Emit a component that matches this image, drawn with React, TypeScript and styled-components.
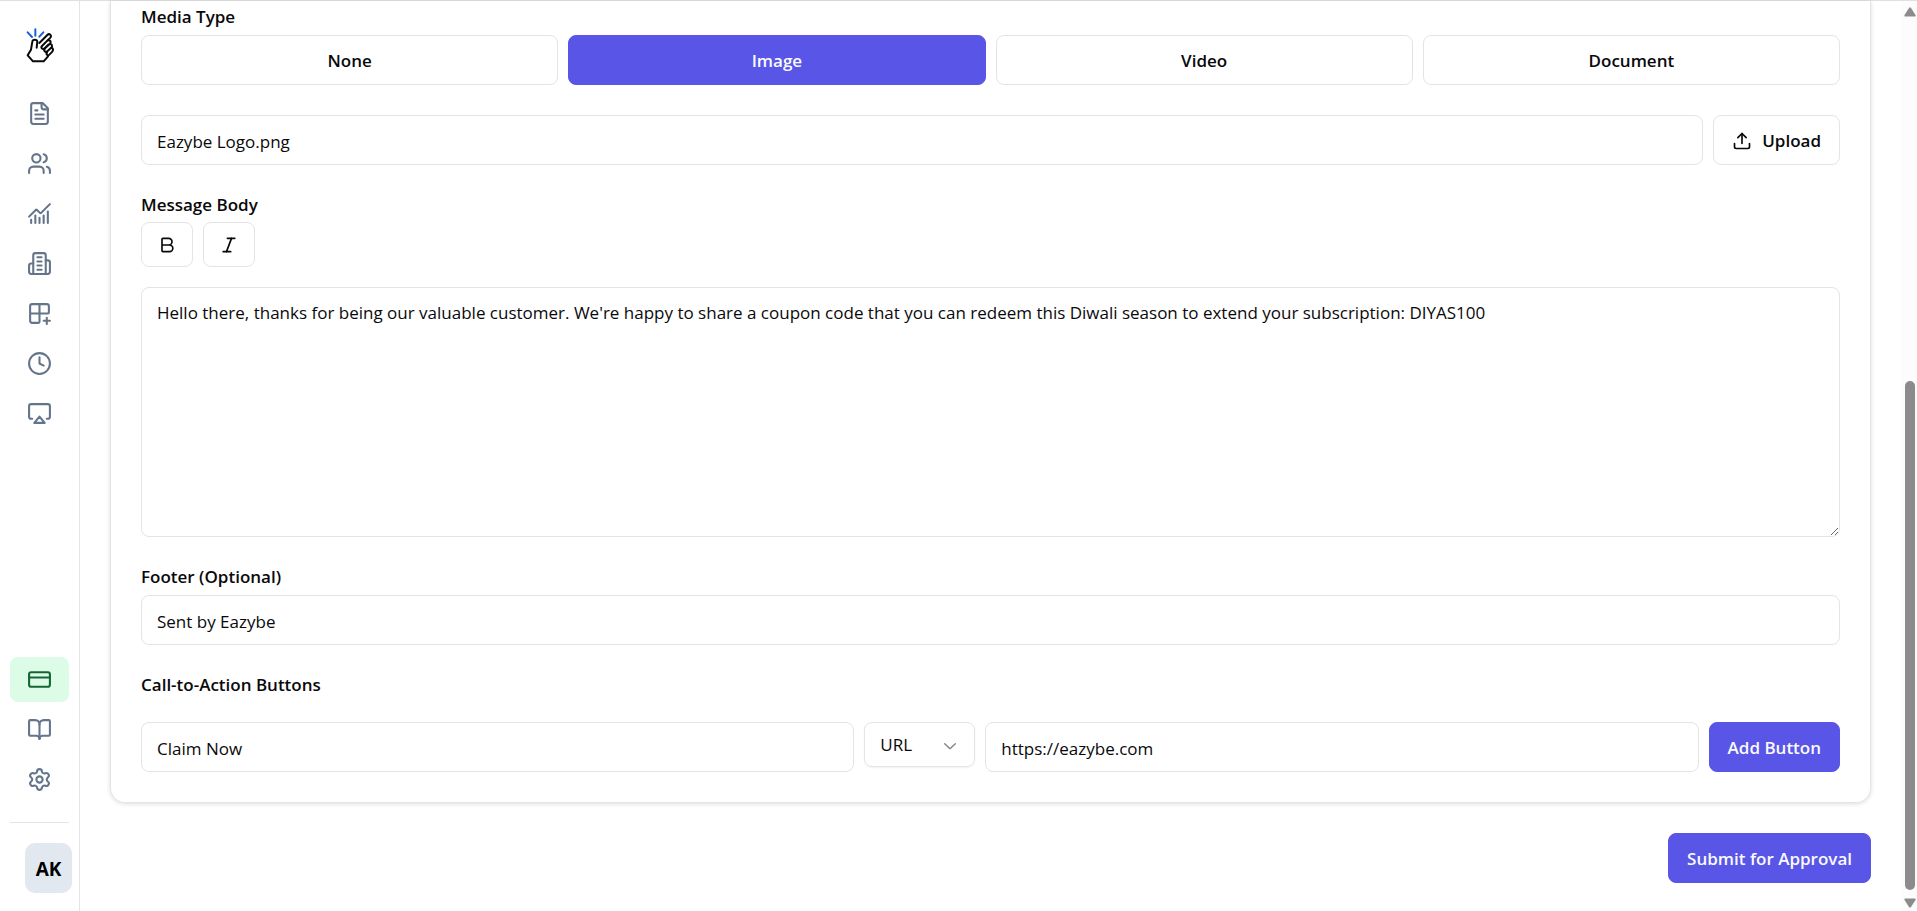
import React, { useState } from "react";
import styled, { createGlobalStyle, css } from "styled-components";
import { Airplay, Bold, BookOpen, ChartNoAxesCombined, Italic, Settings, Upload, Users } from "lucide-react";

const c = {
  border: "#e4e4e7",
  text: "#09090b",
  primary: "#5855e7",
  onPrimary: "#fafafa",
  icon: "#64748b",
};

const GlobalStyle = createGlobalStyle`
  *, *::before, *::after { box-sizing: border-box; }
  body {
    margin: 0;
    background: #fff;
    color: ${c.text};
    font-family: "Segoe UI", "Open Sans", "Noto Sans", sans-serif;
    font-size: 17px;
    line-height: 20px;
  }
  button, input, textarea, select { font: inherit; color: inherit; margin: 0; }
`;

const Page = styled.div`
  display: flex;
  min-height: 100vh;
  border-top: 1px solid #e0e0e0;
`;

const Sidebar = styled.nav`
  display: flex;
  flex-direction: column;
  flex: none;
  width: 80px;
  padding: 26px 10px 18px;
  border-right: 1px solid ${c.border};
`;

const LogoLink = styled.a`
  display: flex;
  justify-content: center;
  margin-bottom: 28px;
`;

const NavList = styled.div<{ $end?: boolean }>`
  display: flex;
  flex-direction: column;
  gap: 5px;
  ${(p) => p.$end && css`margin-top: auto;`}
`;

const NavLink = styled.a<{ $active?: boolean }>`
  display: flex;
  align-items: center;
  justify-content: center;
  height: 45px;
  border-radius: 8px;
  color: ${(p) => (p.$active ? "#166534" : c.icon)};
  background: ${(p) => (p.$active ? "#dcfce7" : "transparent")};
`;

const Divider = styled.hr`
  width: 100%;
  height: 1px;
  margin: 20px 0;
  border: 0;
  background: ${c.border};
`;

const Avatar = styled.button`
  align-self: flex-end;
  width: 47px;
  height: 50px;
  margin-right: -3px;
  padding: 2px 0 0;
  border: 0;
  border-radius: 10px;
  background: #e2e8f0;
  color: #000;
  font-size: 19px;
  font-weight: 700;
`;

const Main = styled.main`
  display: flex;
  flex-direction: column;
  flex: 1;
  min-width: 0;
  padding: 0 30px 28px;
`;

const Card = styled.section`
  display: flex;
  flex-direction: column;
  gap: 30px;
  padding: 6px 30px 30px;
  border: 1px solid ${c.border};
  border-top: 0;
  border-radius: 0 0 15px 15px;
  box-shadow: 0 1px 4px rgba(0, 0, 0, 0.14);
`;

const Field = styled.div<{ $gap?: number }>`
  display: flex;
  flex-direction: column;
  gap: ${(p) => p.$gap ?? 8}px;
`;

const labelText = css`
  display: block;
  font-weight: 600;
  line-height: 20px;
`;
const Label = styled.label`${labelText}`;
const Heading = styled.div`${labelText}`;

const Row = styled.div`
  display: flex;
  align-items: flex-start;
  gap: 10px;
`;

const Choices = styled.div`
  display: grid;
  grid-template-columns: repeat(4, 1fr);
  gap: 10px;
`;

const Button = styled.button<{ $primary?: boolean }>`
  display: inline-flex;
  align-items: center;
  justify-content: center;
  gap: 10px;
  flex: none;
  height: 50px;
  padding: 1px 18px 0;
  border: 1px solid ${(p) => (p.$primary ? c.primary : c.border)};
  border-radius: 8px;
  background: ${(p) => (p.$primary ? c.primary : "#fff")};
  color: ${(p) => (p.$primary ? c.onPrimary : c.text)};
  font-weight: 600;
  white-space: nowrap;
  cursor: pointer;
`;

const ToolButton = styled(Button)`
  width: 52px;
  height: 45px;
  padding: 0;
`;

const Toolbar = styled(Row)`
  margin-bottom: 13px;
`;

const boxed = css`
  border: 1px solid ${c.border};
  border-radius: 8px;
  background: transparent;
  outline-color: ${c.primary};
`;

const TextInput = styled.input`
  ${boxed}
  flex: 1;
  min-width: 0;
  height: 50px;
  padding: 2px 15px 0;
`;

const BlockInput = styled(TextInput)`
  flex: none;
  width: 100%;
`;

const TextArea = styled.textarea`
  ${boxed}
  display: block;
  width: 100%;
  height: 250px;
  padding: 12px 15px;
  line-height: 25px;
  resize: vertical;
`;

const SelectWrap = styled.div`
  position: relative;
  flex: none;
  width: 111px;

  svg {
    position: absolute;
    top: 13px;
    right: 15px;
    opacity: 0.5;
    pointer-events: none;
  }
`;

const Select = styled.select`
  ${boxed}
  appearance: none;
  width: 100%;
  height: 45px;
  padding: 0 15px;
  box-shadow: 0 1px 2px rgba(0, 0, 0, 0.06);
`;

const Actions = styled.div`
  display: flex;
  justify-content: flex-end;
  margin-top: 30px;
`;

const ScrollRail = styled.div`
  display: flex;
  flex-direction: column;
  align-items: center;
  flex: none;
  width: 16px;
  padding: 6px 0 3px 2px;
  background: #fcfcfc;
`;

const Track = styled.div`
  flex: 5;
`;

const Thumb = styled.div`
  flex: 7;
  width: 10px;
  margin-bottom: 8px;
  border-radius: 5px;
  background: #8b8b8b;
`;

const Stroke = ({ children }: { children: React.ReactNode }) => (
  <svg width="25" height="25" viewBox="0 0 24 24" fill="none" stroke="currentColor" strokeWidth="2" strokeLinecap="round" strokeLinejoin="round" aria-hidden="true">
    {children}
  </svg>
);

const FileIcon = () => (
  <Stroke>
    <path d="M15 2H6a2 2 0 0 0-2 2v16a2 2 0 0 0 2 2h12a2 2 0 0 0 2-2V7Z" />
    <path d="M14 2v4a2 2 0 0 0 2 2h4M10 9H8M16 13H8M16 17H8" />
  </Stroke>
);

const BuildingIcon = () => (
  <Stroke>
    <path d="M6 22V4a2 2 0 0 1 2-2h8a2 2 0 0 1 2 2v18Z" />
    <path d="M6 12H4a2 2 0 0 0-2 2v6a2 2 0 0 0 2 2h2M18 9h2a2 2 0 0 1 2 2v9a2 2 0 0 1-2 2h-2" />
    <path d="M10 6h4M10 10h4M10 14h4M10 18h4" />
  </Stroke>
);

const GridPlusIcon = () => (
  <Stroke>
    <path d="M12 3v17a1 1 0 0 1-1 1H5a2 2 0 0 1-2-2V5a2 2 0 0 1 2-2h14a2 2 0 0 1 2 2v6a1 1 0 0 1-1 1H3M16 19h6M19 22v-6" />
  </Stroke>
);

const ClockIcon = () => (
  <Stroke>
    <circle cx="12" cy="12" r="10" />
    <path d="M12 6v6l4 2" />
  </Stroke>
);

const CardIcon = () => (
  <Stroke>
    <rect x="2" y="5" width="20" height="14" rx="2" />
    <path d="M2 10h20" />
  </Stroke>
);

const Logo = () => (
  <svg width="28" height="36" viewBox="0 0 84 108" fill="none" strokeWidth="6" strokeLinecap="round" strokeLinejoin="round" role="img" aria-label="Eazybe">
    <g stroke="#1560e0">
      <path d="M5 16 18 30M28 7V26M52 16 40 29" />
    </g>
    <g stroke="#0a0a0a">
      <path d="M32 62 34 44C33 36 20 36 19 44L15 68 5 85 21 103H53L66 88" />
      <path d="M40 48 64 24C70 18 79 25 73 32L48 57C43 63 50 69 56 64L67 53" />
      <path d="M66 40C75 39 76 46 71 51L57 64C51 72 59 78 65 72L77 61C80 56 77 52 73 51" />
      <path d="M77 62C83 66 82 71 77 76L70 83C65 87 59 82 63 76" />
    </g>
  </svg>
);

const Chevron = () => (
  <svg width="20" height="20" viewBox="0 0 15 15" fill="currentColor" aria-hidden="true">
    <path d="M3.135 6.158a.5.5 0 0 1 .707-.023L7.500 9.565l3.658-3.430a.5.5 0 0 1 .684.730l-4 3.750a.5.5 0 0 1-.684 0l-4-3.750a.5.5 0 0 1-.023-.707Z" />
  </svg>
);

const topLinks = [
  { name: "Templates", icon: <FileIcon /> },
  { name: "Contacts", icon: <Users size={25} /> },
  { name: "Analytics", icon: <ChartNoAxesCombined size={25} /> },
  { name: "Organization", icon: <BuildingIcon /> },
  { name: "Integrations", icon: <GridPlusIcon /> },
  { name: "History", icon: <ClockIcon /> },
  { name: "Broadcast", icon: <Airplay size={25} /> },
];

const bottomLinks = [
  { name: "Billing", icon: <CardIcon />, active: true },
  { name: "Guide", icon: <BookOpen size={25} /> },
  { name: "Settings", icon: <Settings size={25} /> },
];

const mediaTypes = ["None", "Image", "Video", "Document"];

export default function App() {
  const [media, setMedia] = useState("Image");

  return (
    <>
      <GlobalStyle />
      <Page>
        <Sidebar aria-label="Main">
          <LogoLink href="#home"><Logo /></LogoLink>
          <NavList>
            {topLinks.map((l) => (
              <NavLink key={l.name} href={"#" + l.name.toLowerCase()} aria-label={l.name}>{l.icon}</NavLink>
            ))}
          </NavList>
          <NavList $end>
            {bottomLinks.map((l) => (
              <NavLink key={l.name} href={"#" + l.name.toLowerCase()} aria-label={l.name} $active={l.active}>{l.icon}</NavLink>
            ))}
          </NavList>
          <Divider />
          <Avatar type="button">AK</Avatar>
        </Sidebar>

        <Main>
          <Card>
            <Field role="group" aria-labelledby="media-type">
              <Heading id="media-type">Media Type</Heading>
              <Choices>
                {mediaTypes.map((m) => (
                  <Button key={m} type="button" $primary={m === media} aria-pressed={m === media} onClick={() => setMedia(m)}>{m}</Button>
                ))}
              </Choices>
            </Field>

            <Row>
              <TextInput aria-label="Media file" defaultValue="Eazybe Logo.png" />
              <Button type="button"><Upload size={20} />Upload</Button>
            </Row>

            <Field $gap={7}>
              <Label htmlFor="body">Message Body</Label>
              <Toolbar>
                <ToolButton type="button" aria-label="Bold"><Bold size={20} /></ToolButton>
                <ToolButton type="button" aria-label="Italic"><Italic size={20} /></ToolButton>
              </Toolbar>
              <TextArea id="body" defaultValue="Hello there, thanks for being our valuable customer. We're happy to share a coupon code that you can redeem this Diwali season to extend your subscription: DIYAS100" />
            </Field>

            <Field>
              <Label htmlFor="footer">Footer (Optional)</Label>
              <BlockInput id="footer" defaultValue="Sent by Eazybe" />
            </Field>

            <Field $gap={27} role="group" aria-labelledby="cta">
              <Heading id="cta">Call-to-Action Buttons</Heading>
              <Row>
                <TextInput aria-label="Button text" defaultValue="Claim Now" />
                <SelectWrap>
                  <Select aria-label="Button type" defaultValue="URL">
                    <option>URL</option>
                    <option>Phone</option>
                  </Select>
                  <Chevron />
                </SelectWrap>
                <TextInput aria-label="Button link" defaultValue="https://eazybe.com" />
                <Button type="button" $primary>Add Button</Button>
              </Row>
            </Field>
          </Card>
          <Actions>
            <Button type="submit" $primary>Submit for Approval</Button>
          </Actions>
        </Main>

        <ScrollRail aria-hidden="true">
          <svg width="12" height="10" viewBox="0 0 12 10" fill="#8b8b8b"><path d="M5 1Q6-.5 7 1L11.500 8Q12 9.500 10.500 9.500H1.500Q0 9.500.5 8Z" /></svg>
          <Track />
          <Thumb />
          <svg width="12" height="10" viewBox="0 0 12 10" fill="#8b8b8b"><path d="M5 9Q6 10.500 7 9L11.500 2Q12 .5 10.500.5H1.500Q0 .5.500 2Z" /></svg>
        </ScrollRail>
      </Page>
    </>
  );
}
